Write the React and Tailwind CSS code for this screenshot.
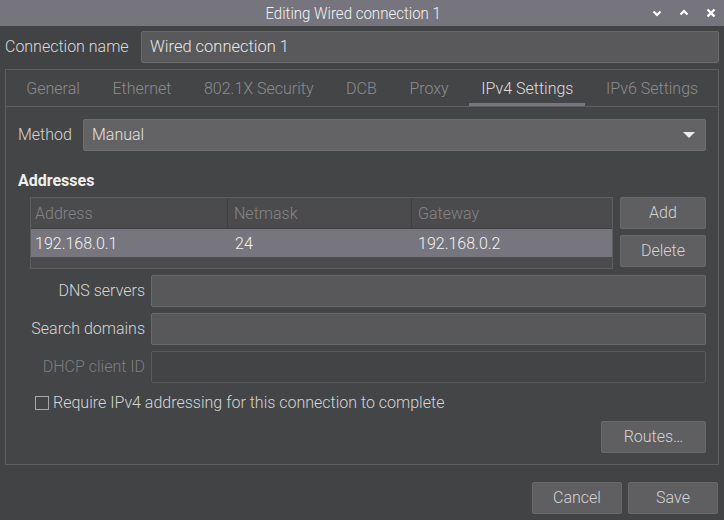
import React from 'react';

const tabs = ['General', 'Ethernet', '802.1X Security', 'DCB', 'Proxy', 'IPv4 Settings', 'IPv6 Settings'];

function Btn({ children, className = '' }) {
  return (
    <div
      className={`h-[32px] flex items-center justify-center rounded-[2px] border border-[#6a6a6c] bg-[#5f5f61] text-[#d4d4d4] ${className}`}
    >
      {children}
    </div>
  );
}

function Field({ label, disabled }) {
  return (
    <div className="flex items-center h-[32px]">
      <div className={`w-[133px] pr-[6px] text-right ${disabled ? 'text-[#7e7e80]' : 'text-[#d6d6d6]'}`}>{label}</div>
      <div
        className={`flex-1 h-full rounded-[2px] border ${
          disabled ? 'border-[#5a5a5c] bg-[#434446]' : 'border-[#6a6a6c] bg-[#58585a]'
        }`}
      />
    </div>
  );
}

export default function App() {
  return (
    <div className="w-[724px] h-[520px] bg-[#424345] font-['Roboto',sans-serif] font-light text-[16px] flex flex-col overflow-hidden">
      <div className="h-[26px] bg-[#76757d] grid grid-cols-[1fr_auto_1fr] items-center">
        <div />
        <div className="text-[#f2f2f2] text-[17px] leading-none mr-[18px]">
          <span className="inline-block scale-x-[0.885]">Editing Wired connection 1</span>
        </div>
        <div className="flex justify-end items-center gap-[15px] pr-[7px] text-white">
          <svg width="12" height="12" viewBox="0 0 12 12">
            <path d="M2.5 4.5 L6 8 L9.5 4.5" stroke="white" strokeWidth="2.2" fill="none" />
          </svg>
          <svg width="12" height="12" viewBox="0 0 12 12">
            <path d="M2.5 7.5 L6 4 L9.5 7.5" stroke="white" strokeWidth="2.2" fill="none" />
          </svg>
          <svg width="12" height="12" viewBox="0 0 12 12">
            <path d="M2.5 2.5 L9.5 9.5 M9.5 2.5 L2.5 9.5" stroke="white" strokeWidth="2.4" fill="none" />
          </svg>
        </div>
      </div>

      <div className="flex items-center px-[5px] mt-[5px] h-[32px]">
        <div className="w-[136px] text-[#dadada] text-[17px]">
          <span className="inline-block origin-left scale-x-[0.94]">Connection name</span>
        </div>
        <div className="flex-1 h-full rounded-[2px] border border-[#6a6a6c] bg-[#59595b] flex items-center pl-[8px] text-[#e6e6e6] text-[17px]">
          <span className="inline-block origin-left scale-x-[0.97]">Wired connection 1</span>
        </div>
      </div>

      <div className="mx-[5px] mt-[6px] h-[396px] border border-[#5e5e60] bg-[#444547] flex flex-col">
        <div className="h-[37px] flex pl-[4px] border-b border-[#5e5e60] overflow-hidden">
          {tabs.map((t) => {
            const active = t === 'IPv4 Settings';
            return (
              <div key={t} className="px-[16.3px] flex flex-col shrink-0">
                <div
                  className={`flex-1 flex items-center pt-[4px] whitespace-nowrap ${
                    active ? 'text-[#dedede]' : 'text-[#8c8c8e]'
                  }`}
                >
                  {t}
                </div>
                <div className={`h-[3px] mx-[-12px] ${active ? 'bg-[#77767e]' : ''}`} />
              </div>
            );
          })}
        </div>

        <div className="flex flex-col px-[12px] pt-[12px]">
          <div className="flex items-center h-[32px]">
            <div className="w-[65px] text-[#d6d6d6]">Method</div>
            <div className="flex-1 h-full rounded-[2px] border border-[#6e6e70] bg-[#636365] flex items-center justify-between pl-[8px] pr-[10px] text-[#e2e2e2]">
              <span>Manual</span>
              <svg width="12" height="8" viewBox="0 0 12 8">
                <path d="M0 1 L12 1 L6 7 Z" fill="#ececec" />
              </svg>
            </div>
          </div>

          <div className="mt-[22px] font-bold text-[#efefef] leading-none">Addresses</div>

          <div className="flex mt-[8px] ml-[12px] gap-[7px]">
            <div className="flex-1 h-[72px] border border-[#5e5e60] bg-[#4b4b4d] flex flex-col">
              <div className="h-[31px] grid grid-cols-[197px_184px_1fr] text-[#858587] border-b border-[#3f3f41]">
                <div className="pl-[4px] pt-[2px] flex items-center border-r border-[#3f3f41]">Address</div>
                <div className="pl-[6px] pt-[2px] flex items-center border-r border-[#3f3f41]">Netmask</div>
                <div className="pl-[6px] pt-[2px] flex items-center">Gateway</div>
              </div>
              <div className="h-[28px] grid grid-cols-[197px_184px_1fr] bg-[#77767e] text-[#f2f2f2]">
                <div className="pl-[4px] pt-[1px] flex items-center">192.168.0.1</div>
                <div className="pl-[7px] pt-[1px] flex items-center">24</div>
                <div className="pl-[6px] pt-[1px] flex items-center">192.168.0.2</div>
              </div>
            </div>
            <div className="w-[86px] flex flex-col gap-[6px]">
              <Btn>Add</Btn>
              <Btn>Delete</Btn>
            </div>
          </div>

          <div className="flex flex-col gap-[6px] mt-[6px]">
            <Field label="DNS servers" />
            <Field label="Search domains" />
            <Field label="DHCP client ID" disabled />
          </div>

          <div className="flex items-center mt-[12px] ml-[17px] h-[16px] text-[#d6d6d6]">
            <div className="w-[14px] h-[14px] border border-[#a8a8aa] mr-[4px]" />
            <span>Require IPv4 addressing for this connection to complete</span>
          </div>

          <div className="flex justify-end mt-[10px]">
            <Btn className="w-[105px]">Routes…</Btn>
          </div>
        </div>
      </div>

      <div className="flex justify-end gap-[6px] px-[6px] mt-[17px]">
        <Btn className="w-[90px]">Cancel</Btn>
        <Btn className="w-[90px]">Save</Btn>
      </div>
    </div>
  );
}
